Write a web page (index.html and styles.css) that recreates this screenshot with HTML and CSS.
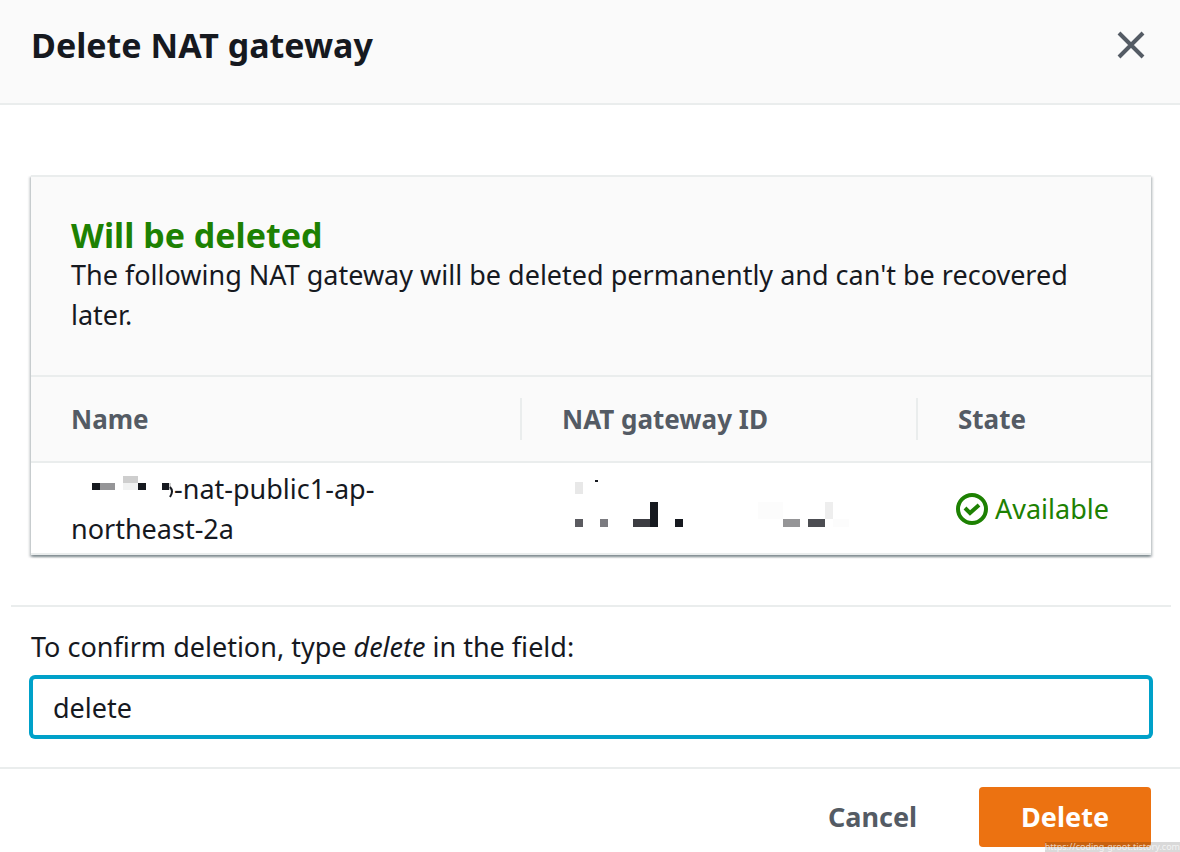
FILE: index.html
```html
<!DOCTYPE html>
<html lang="en">
<head>
    <meta charset="UTF-8">
    <meta name="viewport" content="width=device-width, initial-scale=1.0">
    <title>Delete NAT gateway</title>
    <link rel="stylesheet" href="styles.css">
</head>
<body>
    <div class="modal" role="dialog" aria-labelledby="modal-title">
        <header class="modal-header">
            <h1 id="modal-title">Delete NAT gateway</h1>
            <button type="button" class="close-btn" aria-label="Close">
                <svg width="28" height="28" viewBox="0 0 28 28" fill="none" stroke="currentColor" stroke-width="4">
                    <path d="M2 2l24 24M26 2L2 26"/>
                </svg>
            </button>
        </header>

        <form id="deleteForm">
            <div class="modal-body">
                <section class="card">
                    <div class="card-header">
                        <h2>Will be deleted</h2>
                        <p>The following NAT gateway will be deleted permanently and can't be recovered later.</p>
                    </div>
                    <table>
                        <thead>
                            <tr>
                                <th class="col-name"><div>Name</div></th>
                                <th class="col-id"><div>NAT gateway ID</div></th>
                                <th><div>State</div></th>
                            </tr>
                        </thead>
                        <tbody>
                            <tr>
                                <td>
                                    <svg class="masked-name" width="103" height="24" viewBox="0 0 103 24" aria-hidden="true">
                                        <path fill="#16191f" d="M21 8h8v7h-8zM67 8h8v7h-8zM91 8h7v7h-7z"/>
                                        <path fill="#959597" d="M29 8h15v7H29z"/>
                                        <path fill="#cecece" d="M52 1h15v7H52zM98 8h2v7h-2z"/>
                                        <path fill="#f1f2f2" d="M52 8h15v7H52z"/>
                                        <path fill="none" stroke="#16191f" stroke-width="2" d="M99 12q4 4 0 10"/>
                                    </svg>-nat-public1-ap-<br>northeast-2a
                                </td>
                                <td>
                                    <svg class="masked-id" width="290" height="62" viewBox="1 0 290 62" aria-hidden="true">
                                        <path fill="#e8e8e8" d="M14 4h8v12h-8z"/>
                                        <path fill="#16191f" d="M34 2h3v2h-3zM89 24h8v25h-8zM114 41h8v8h-8z"/>
                                        <path fill="#5b5b60" d="M14 41h8v8h-8z"/>
                                        <path fill="#7b7b80" d="M39 41h8v8h-8z"/>
                                        <path fill="#3c3d42" d="M72 41h17v8H72z"/>
                                        <path fill="#fcfcfc" d="M197 24h25v17h-25zM272 41h16v8h-16z"/>
                                        <path fill="#959597" d="M222 41h17v8h-17z"/>
                                        <path fill="#4c4d52" d="M247 41h17v8h-17z"/>
                                        <path fill="#eeeeee" d="M264 24h8v17h-8z"/>
                                    </svg>
                                </td>
                                <td>
                                    <span class="status">
                                        <svg width="32" height="32" viewBox="0 0 32 32" fill="none" stroke="currentColor" stroke-width="4">
                                            <circle cx="16" cy="16" r="14"/>
                                            <path d="M9 15l5 5 9-8"/>
                                        </svg>
                                        Available
                                    </span>
                                </td>
                            </tr>
                        </tbody>
                    </table>
                </section>

                <div class="confirm">
                    <label for="confirm">To confirm deletion, type <em>delete</em> in the field:</label>
                    <input type="text" id="confirm" name="confirm" value="delete" autocomplete="off">
                </div>
            </div>

            <footer class="modal-footer">
                <button type="button" class="btn">Cancel</button>
                <button type="submit" class="btn btn-primary">Delete</button>
            </footer>
        </form>
        <span class="watermark">https://coding-groot.tistory.com</span>
    </div>
</body>
</html>
```

FILE: styles.css
```css
* {
    box-sizing: border-box;
}
body {
    margin: 0;
    font-family: "Noto Sans", sans-serif;
    font-size: 27px;
    line-height: 40px;
    color: #16191f;
    background-color: #fff;
}
h1, h2, p {
    margin: 0;
}
.modal {
    position: relative;
}
.modal-header {
    display: flex;
    justify-content: space-between;
    align-items: flex-start;
    padding: 25px 35px 38px 31px;
    background-color: #fafafa;
    border-bottom: 2px solid #eaeded;
}
h1, h2 {
    font-size: 34px;
    line-height: 40px;
    font-weight: 700;
}
.close-btn {
    display: flex;
    align-items: center;
    height: 40px;
    padding: 0;
    border: none;
    background: none;
    color: #545b64;
    cursor: pointer;
}
.modal-body {
    padding: 70px 9px 30px 11px;
}
.card {
    margin: 0 20px 50px;
    border-top: 2px solid #eaeded;
    box-shadow: 0 2px 2px 0 rgba(0, 28, 36, 0.3), 2px 2px 2px 0 rgba(0, 28, 36, 0.15), -2px 2px 2px 0 rgba(0, 28, 36, 0.15);
}
.card-header {
    padding: 38px 40px 40px;
    background-color: #fafafa;
    border-bottom: 2px solid #eaeded;
}
h2 {
    color: #1d8102;
}
table {
    width: 100%;
    table-layout: fixed;
    border-collapse: separate;
    border-spacing: 0;
}
.col-name {
    width: 491px;
}
.col-id {
    width: 396px;
}
th {
    padding: 21px 0;
    font-size: 26px;
    text-align: left;
    color: #545b64;
    background-color: #fafafa;
    border-bottom: 2px solid #eaeded;
}
th div {
    padding: 1px 40px;
    border-right: 2px solid #eaeded;
}
th:last-child div {
    border-right: none;
}
td {
    padding: 6px 0 4px 40px;
    border-bottom: 2px solid #eaeded;
}
.masked-name {
    vertical-align: baseline;
}
.masked-id {
    display: block;
}
.status {
    display: flex;
    align-items: center;
    gap: 7px;
    color: #1d8102;
}
.status svg {
    margin-left: -2px;
}
.confirm {
    display: flex;
    flex-direction: column;
    gap: 10px;
    padding: 20px 20px 0;
    border-top: 2px solid #eaeded;
}
input {
    width: 100%;
    height: 60px;
    padding: 0 20px;
    border: 2px solid #00a1c9;
    border-radius: 4px;
    box-shadow: 0 0 0 2px #00a1c9;
    font: inherit;
    color: inherit;
    outline: none;
}
.modal-footer {
    display: flex;
    justify-content: flex-end;
    gap: 20px;
    padding: 18px 29px 5px;
    border-top: 2px solid #eaeded;
}
.btn {
    height: 60px;
    padding: 0 42px;
    border: none;
    border-radius: 4px;
    background: none;
    font: inherit;
    font-weight: 700;
    color: #545b64;
    cursor: pointer;
}
.btn-primary {
    background-color: #ec7211;
    color: #fff;
}
.watermark {
    position: absolute;
    right: 0;
    bottom: 0;
    font-size: 9px;
    line-height: 10px;
    color: rgba(255, 255, 255, 0.7);
    background-color: rgba(0, 0, 0, 0.15);
}
```
